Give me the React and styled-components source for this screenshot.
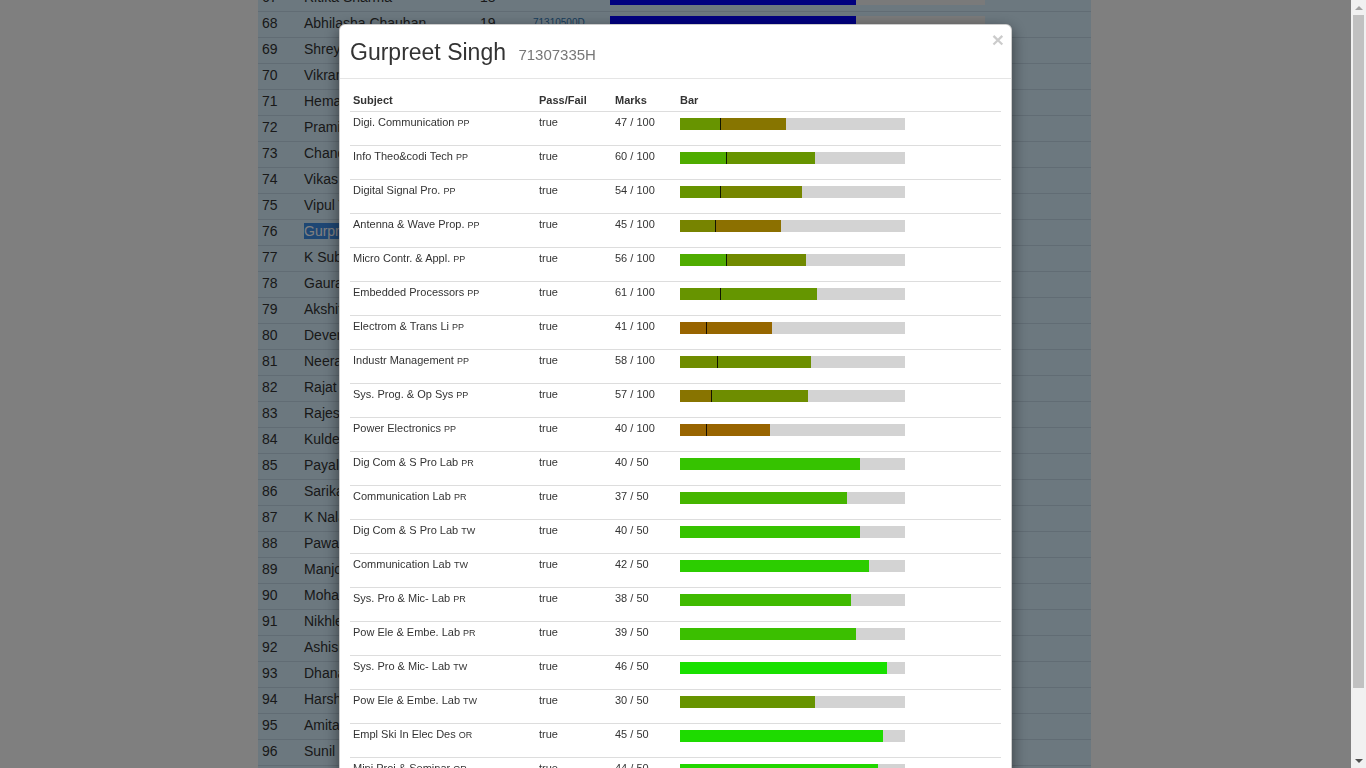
import React from "react";
import styled, { createGlobalStyle } from "styled-components";

const students = [
  [67, "Ritika Sharma", 18, "71310499F", 65.6],
  [68, "Abhilasha Chauhan", 19, "71310500D", 65.6],
  [69, "Shreya Gupta", 20, "71310501B", 60],
  [70, "Vikram Rathore", 21, "71310502L", 58],
  [71, "Hema Malik", 22, "71310503J", 61],
  [72, "Pramila Devi", 23, "71310504G", 55],
  [73, "Chandresh Kumar", 24, "71310505E", 57],
  [74, "Vikas Kaushik", 25, "71310506C", 54],
  [75, "Vipul Tyagi", 26, "71310507M", 62],
  [76, "Gurpreet Singh", 27, "71307335H", 52],
  [77, "K Subhash", 28, "71310509H", 50],
  [78, "Gaurav Mehta", 29, "71310510A", 59],
  [79, "Akshit Verma", 30, "71310511L", 49],
  [80, "Devendra Yadav", 31, "71310512J", 48],
  [81, "Neeraj Bansal", 32, "71310513G", 47],
  [82, "Rajat Sethi", 33, "71310514E", 46],
  [83, "Rajesh Kumar", 34, "71310515C", 45],
  [84, "Kuldeep Singh", 35, "71310516M", 44],
  [85, "Payal Saini", 36, "71310517K", 43],
  [86, "Sarika Jain", 37, "71310518H", 42],
  [87, "K Nalanda", 38, "71310519F", 41],
  [88, "Pawan Kumar", 39, "71310520K", 40],
  [89, "Manjot Kaur", 40, "71310521H", 39],
  [90, "Mohammad Arif", 41, "71310522F", 38],
  [91, "Nikhlesh Rana", 42, "71310523D", 37],
  [92, "Ashish Arora", 43, "71310524B", 36],
  [93, "Dhananjay Pal", 44, "71310525L", 35],
  [94, "Harshit Goel", 45, "71310526J", 34],
  [95, "Amitabh Roy", 46, "71310527G", 33],
  [96, "Sunil Kumar", 47, "71310528E", 32],
  [97, "Tarun Bhatia", 48, "71310529C", 31],
];

const subjects = [
  ["Digi. Communication", "PP", 47, 100, 18],
  ["Info Theo&codi Tech", "PP", 60, 100, 21],
  ["Digital Signal Pro.", "PP", 54, 100, 18],
  ["Antenna & Wave Prop.", "PP", 45, 100, 16],
  ["Micro Contr. & Appl.", "PP", 56, 100, 21],
  ["Embedded Processors", "PP", 61, 100, 18],
  ["Electrom & Trans Li", "PP", 41, 100, 12],
  ["Industr Management", "PP", 58, 100, 17],
  ["Sys. Prog. & Op Sys", "PP", 57, 100, 14],
  ["Power Electronics", "PP", 40, 100, 12],
  ["Dig Com & S Pro Lab", "PR", 40, 50],
  ["Communication Lab", "PR", 37, 50],
  ["Dig Com & S Pro Lab", "TW", 40, 50],
  ["Communication Lab", "TW", 42, 50],
  ["Sys. Pro & Mic- Lab", "PR", 38, 50],
  ["Pow Ele & Embe. Lab", "PR", 39, 50],
  ["Sys. Pro & Mic- Lab", "TW", 46, 50],
  ["Pow Ele & Embe. Lab", "TW", 30, 50],
  ["Empl Ski In Elec Des", "OR", 45, 50],
  ["Mini Proj & Seminar", "OR", 44, 50],
];

const BAR_WIDTH = 225;

// red -> green depending on the share of marks
const gradeColor = (p) => {
  const r = Math.max(0, Math.min(255, Math.round(250 - 245 * p)));
  const g = Math.max(0, Math.min(255, Math.round(238 * p + 5)));
  return `rgb(${r}, ${g}, 0)`;
};

const App = () => {
  return (
    <>
      <GlobalStyle />
      <Page>
        <Container>
          {students.map(([no, name, roll, id, bar]) => (
            <BgRow key={no}>
              <span>{no}</span>
              <span>
                {no === 76 ? (
                  <>
                    <Selected>Gurpre</Selected>et Singh
                  </>
                ) : (
                  name
                )}
              </span>
              <span>{roll}</span>
              <BgLink>{id}</BgLink>
              <BgTrack>
                <BgFill style={{ width: `${bar}%` }} />
              </BgTrack>
            </BgRow>
          ))}
        </Container>
      </Page>

      <Screen>
        <Overlay>
          <Dialog>
            <Header>
              <Title>
                Gurpreet Singh <Small>71307335H</Small>
              </Title>
              <Close>×</Close>
            </Header>
            <Body>
              <HeadRow>
                <span>Subject</span>
                <span>Pass/Fail</span>
                <span>Marks</span>
                <span>Bar</span>
              </HeadRow>
              {subjects.map(([name, kind, marks, max, internal], i) => {
                const scale = BAR_WIDTH / max;
                const total = marks / max;
                return (
                  <Row key={i}>
                    <Cell>
                      {name} <Kind>{kind}</Kind>
                    </Cell>
                    <Cell>true</Cell>
                    <Cell>
                      {marks} / {max}
                    </Cell>
                    <Cell>
                      <Track>
                        {internal ? (
                          <>
                            <Segment
                              $tick
                              style={{
                                width: internal * scale,
                                background: gradeColor(internal / 30),
                              }}
                            />
                            <Segment
                              style={{
                                width: (marks - internal) * scale,
                                background: gradeColor(total),
                              }}
                            />
                          </>
                        ) : (
                          <Segment
                            style={{
                              width: marks * scale,
                              background: gradeColor(total),
                            }}
                          />
                        )}
                      </Track>
                    </Cell>
                  </Row>
                );
              })}
            </Body>
          </Dialog>
        </Overlay>
        <Scrollbar>
          <Arrow />
          <ScrollTrack>
            <Thumb />
          </ScrollTrack>
          <Arrow $down />
        </Scrollbar>
      </Screen>
    </>
  );
};

const GlobalStyle = createGlobalStyle`
  html, body {
    margin: 0;
    overflow: hidden;
    background: #fff;
    font-family: "Liberation Sans", Arial, sans-serif;
    color: #333;
  }
`;

const Page = styled.div`
  margin-right: 17px;
  margin-top: -15px;
`;

const Container = styled.div`
  width: 833px;
  margin: 0 auto;
  background: #d8f0ff;
  min-height: 820px;
`;

const BgRow = styled.div`
  display: grid;
  grid-template-columns: 42px 176px 53px 77px 375px;
  align-items: center;
  height: 26px;
  box-sizing: border-box;
  padding: 0 0 4px 4px;
  border-top: 1px solid #c2d8e8;
  font-size: 14px;
  color: #333;
  white-space: nowrap;
  overflow: hidden;
`;

const Selected = styled.span`
  background: #3d8ee8;
  color: #fff;
`;

const BgLink = styled.span`
  font-size: 10px;
  color: #337ab7;
`;

const BgTrack = styled.div`
  width: 375px;
  height: 15px;
  background: #f4f4f4;
  margin-top: 2px;
  display: flex;
`;

const BgFill = styled.div`
  background: #0000ff;
`;

const Screen = styled.div`
  position: fixed;
  inset: 0;
  display: flex;
`;

const Overlay = styled.div`
  flex: 1;
  background: rgba(0, 0, 0, 0.5);
  overflow: hidden;
`;

const Scrollbar = styled.div`
  width: 15px;
  background: #f1f1f1;
  display: flex;
  flex-direction: column;
  align-items: center;
`;

const Arrow = styled.div`
  height: 15px;
  width: 15px;
  display: flex;
  align-items: center;
  justify-content: center;

  &::before {
    content: "";
    border-left: 4px solid transparent;
    border-right: 4px solid transparent;
    ${(p) =>
      p.$down
        ? "border-top: 4px solid #505050;"
        : "border-bottom: 4px solid #a3a3a3;"}
  }
`;

const ScrollTrack = styled.div`
  flex: 1;
  width: 11px;
`;

const Thumb = styled.div`
  height: 673px;
  background: #c1c1c1;
`;

const Dialog = styled.div`
  width: 673px;
  box-sizing: border-box;
  margin: 24px auto 30px;
  background: #fff;
  border: 1px solid rgba(0, 0, 0, 0.2);
  border-radius: 6px;
  box-shadow: 0 5px 15px rgba(0, 0, 0, 0.5);
`;

const Header = styled.div`
  display: flex;
  justify-content: space-between;
  align-items: flex-start;
  padding: 15px 10px 14px;
  border-bottom: 1px solid #e5e5e5;
`;

const Title = styled.h3`
  margin: 0;
  height: 24px;
  font-size: 23px;
  line-height: 24px;
  font-weight: 400;
  color: #333;
`;

const Small = styled.small`
  margin-left: 6px;
  font-size: 15px;
  line-height: 1;
  color: #777;
`;

const Close = styled.span`
  margin: -11px -3px 0 0;
  font-size: 21px;
  line-height: 1;
  font-weight: 700;
  color: #000;
  opacity: 0.2;
`;

const Body = styled.div`
  padding: 15px 10px;
`;

const columns = `
  display: grid;
  grid-template-columns: 186px 76px 65px 1fr;
  font-size: 11px;
  line-height: 12px;
  color: #333;
`;

const HeadRow = styled.div`
  ${columns}
  height: 17px;
  font-weight: 700;

  span {
    padding: 0 3px;
  }
`;

const Row = styled.div`
  ${columns}
  height: 34px;
  box-sizing: border-box;
  border-top: 1px solid #ddd;
  padding-top: 4px;
`;

const Cell = styled.div`
  padding: 0 3px;
  white-space: nowrap;
`;

const Kind = styled.span`
  font-size: 9px;
`;

const Track = styled.div`
  display: flex;
  width: ${BAR_WIDTH}px;
  height: 12px;
  margin-top: 2px;
  background: #d3d3d3;
`;

const Segment = styled.div`
  height: 100%;
  box-shadow: ${(p) => (p.$tick ? "inset -1px 0 0 rgba(0, 0, 0, 0.85)" : "none")};
`;

export default App;
